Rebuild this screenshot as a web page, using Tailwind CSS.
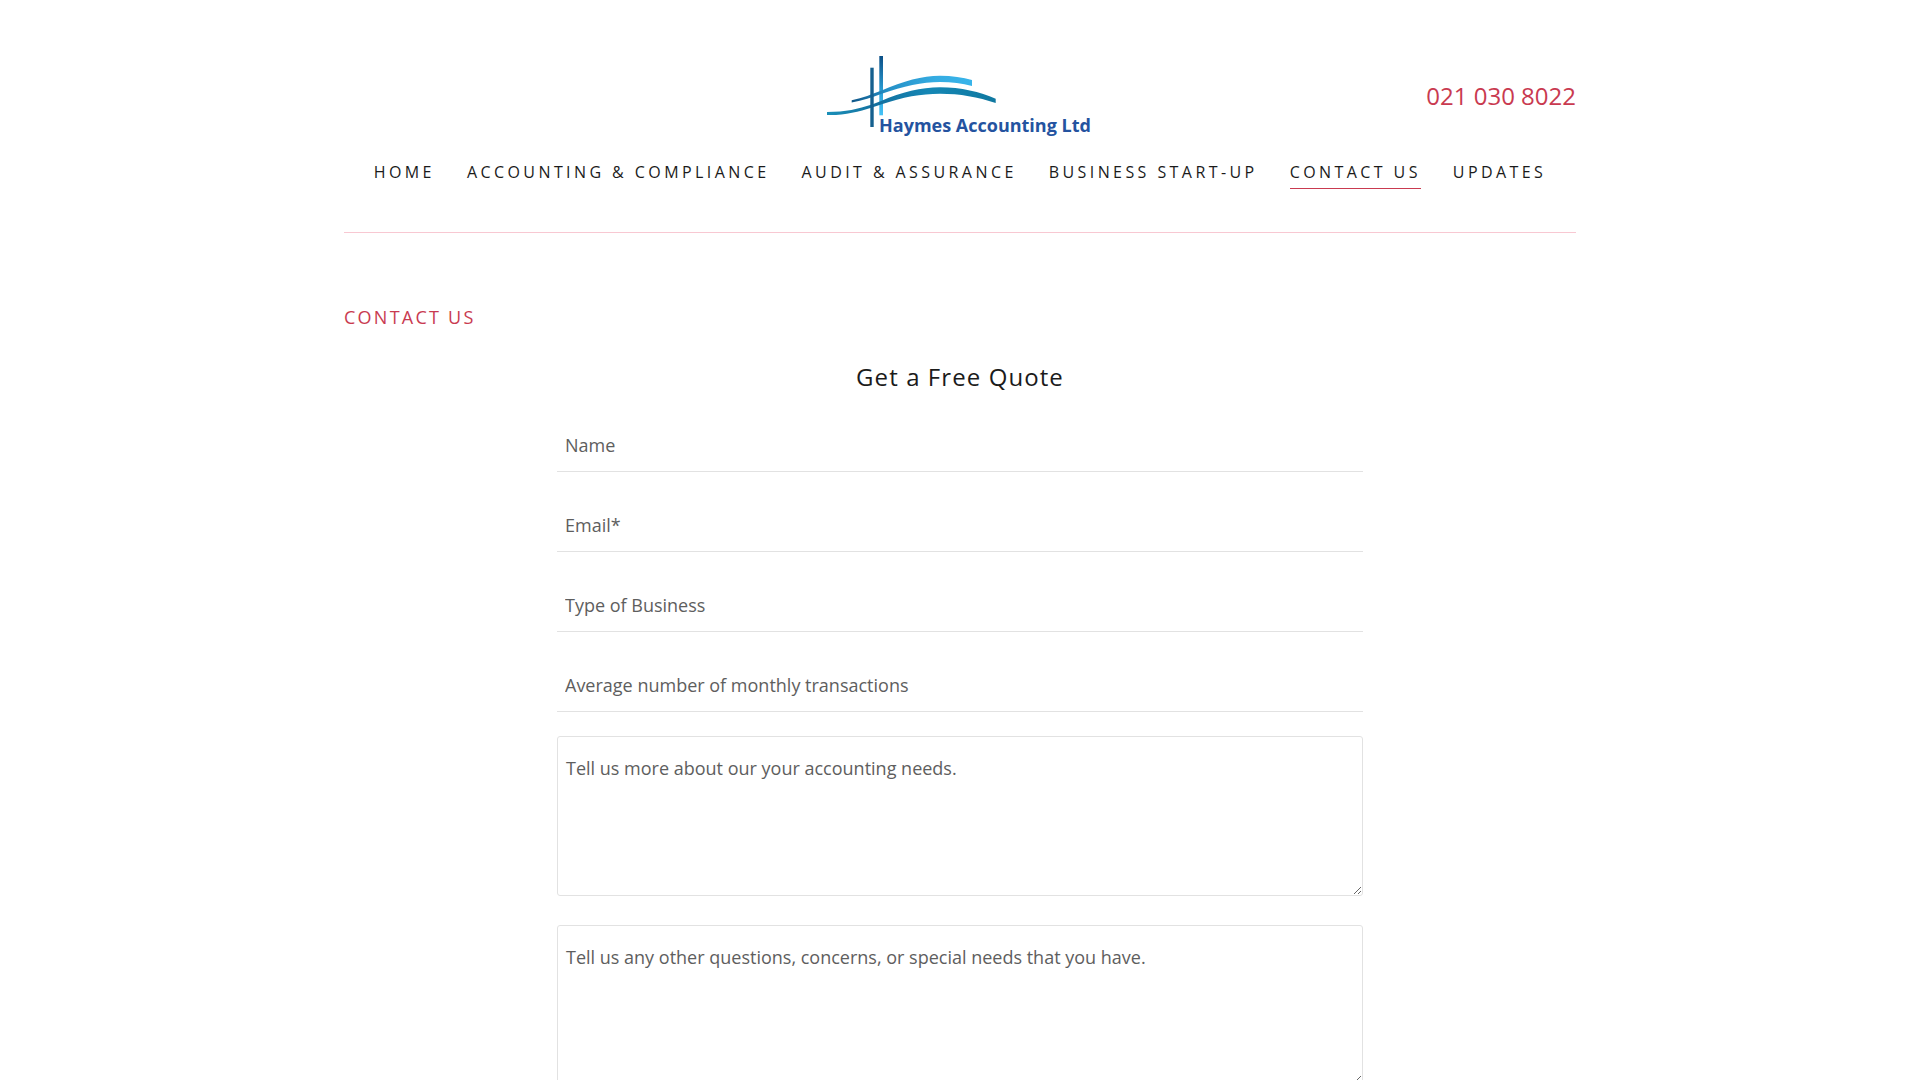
<!DOCTYPE html>
<html lang="en">
  <head>
    <meta charset="UTF-8" />
    <meta name="viewport" content="width=device-width, initial-scale=1.0" />
    <title>Contact Us | Haymes Accounting Ltd</title>
    <script src="https://cdn.jsdelivr.net/npm/@tailwindcss/browser@4"></script>
  </head>
  <body class="bg-white text-[#1b1b1b] font-['Open_Sans',sans-serif]">
    <div class="mx-auto max-w-[1280px] px-6">
      <!-- Header -->
      <header class="border-b border-[#f8c8d2] pt-14 pb-[43px]">
        <div class="grid grid-cols-3 items-center">
          <a href="#" class="col-start-2 justify-self-center" aria-label="Haymes Accounting Ltd">
            <svg class="block w-[268px] h-20" viewBox="0 0 268 80">
              <defs>
                <linearGradient id="tall" x1="0" y1="0" x2="0" y2="1">
                  <stop offset="0" stop-color="#0c4f86" />
                  <stop offset="0.6" stop-color="#2a9fd6" />
                  <stop offset="1" stop-color="#45c3f7" />
                </linearGradient>
                <linearGradient id="upper" x1="0" y1="0" x2="1" y2="0">
                  <stop offset="0" stop-color="#0f5688" />
                  <stop offset="0.3" stop-color="#2590c6" />
                  <stop offset="0.7" stop-color="#35ace2" />
                  <stop offset="1" stop-color="#38b4ea" />
                </linearGradient>
                <linearGradient id="lower" x1="0" y1="0" x2="1" y2="0">
                  <stop offset="0" stop-color="#1a8fb8" />
                  <stop offset="0.3" stop-color="#13709f" />
                  <stop offset="0.6" stop-color="#1587b5" />
                  <stop offset="1" stop-color="#0f78a0" />
                </linearGradient>
              </defs>
              <path fill="url(#tall)" d="M53.3 0H57V59.3H53.3z" />
              <path fill="url(#upper)" d="M25.7 44.3C37 42 46 38 55 34.7C78 25 96 19.7 114 19.7C126 19.7 137 21.5 146 24V30C136 27.5 126 26 114 26C96 26 78 30 55 38C46 41.5 37 44.5 25.7 46.5z" />
              <path fill="url(#lower)" d="M1 56C20 56 32 53 46 48.5L55 45C76 36 95 31.3 114 31.3C135 31.3 154 36 169.7 42.7V47C152 41 134 37.7 114 37.7C95 37.7 77 41 55 48.5L46 51.5C32 56 18 59.5 1 59z" />
              <path fill="#15608f" d="M44.3 11.7H47.7V71H44.3z" />
              <text x="53" y="76" fill="#2453a0" font-size="18" font-weight="700">Haymes Accounting Ltd</text>
            </svg>
          </a>
          <a href="tel:0210308022" class="justify-self-end text-2xl text-[#c93a50]">021 030 8022</a>
        </div>
        <nav class="mt-6 flex justify-center gap-8 text-base leading-6 tracking-[0.214em] whitespace-nowrap">
          <a href="#" class="border-b border-transparent pb-1">HOME</a>
          <a href="#" class="border-b border-transparent pb-1">ACCOUNTING &amp; COMPLIANCE</a>
          <a href="#" class="border-b border-transparent pb-1">AUDIT &amp; ASSURANCE</a>
          <a href="#" class="border-b border-transparent pb-1">BUSINESS START-UP</a>
          <a href="#" class="border-b border-[#c93a50] pb-1">CONTACT US</a>
          <a href="#" class="border-b border-transparent pb-1">UPDATES</a>
        </nav>
      </header>

      <!-- Contact form -->
      <main class="pt-[72px] pb-14">
        <h1 class="text-lg leading-6 tracking-[0.125em] text-[#c93a50]">CONTACT US</h1>
        <h2 class="mt-8 text-center text-2xl leading-8 tracking-[0.045em]">Get a Free Quote</h2>
        <form class="mx-auto mt-[23px] flex max-w-[806px] flex-col gap-6">
          <input type="text" aria-label="Name" placeholder="Name" class="h-14 border-b border-[#e2e2e2] px-2 pt-0.5 text-lg placeholder:text-[#5e5e5e] outline-none" />
          <input type="email" aria-label="Email" placeholder="Email*" class="h-14 border-b border-[#e2e2e2] px-2 pt-0.5 text-lg placeholder:text-[#5e5e5e] outline-none" />
          <input type="text" aria-label="Type of Business" placeholder="Type of Business" class="h-14 border-b border-[#e2e2e2] px-2 pt-0.5 text-lg placeholder:text-[#5e5e5e] outline-none" />
          <input type="text" aria-label="Average number of monthly transactions" placeholder="Average number of monthly transactions" class="h-14 border-b border-[#e2e2e2] px-2 pt-0.5 text-lg placeholder:text-[#5e5e5e] outline-none" />
          <div class="flex flex-col gap-[29px]">
            <textarea aria-label="Accounting needs" placeholder="Tell us more about our your accounting needs." class="h-40 rounded-[3px] border border-[#e2e2e2] px-2 pt-[17px] text-lg placeholder:text-[#5e5e5e] outline-none"></textarea>
            <textarea aria-label="Other questions" placeholder="Tell us any other questions, concerns, or special needs that you have." class="h-40 rounded-[3px] border border-[#e2e2e2] px-2 pt-[17px] text-lg placeholder:text-[#5e5e5e] outline-none"></textarea>
          </div>
        </form>
      </main>
    </div>
  </body>
</html>
